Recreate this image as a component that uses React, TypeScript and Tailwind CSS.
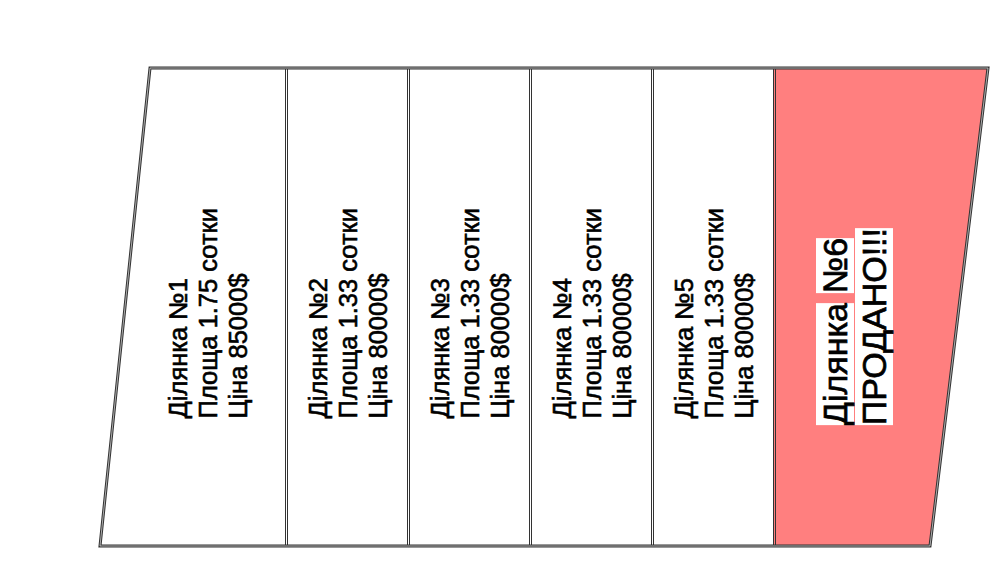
const PLOTS = [
  { n: 2, area: "1.33", price: "80000" },
  { n: 3, area: "1.33", price: "80000" },
  { n: 4, area: "1.33", price: "80000" },
  { n: 5, area: "1.33", price: "80000" },
];

function PlotText({ n, area, price }: { n: number; area: string; price: string }) {
  return (
    <div className="rotate-180 text-[25.5px] leading-[30px] text-black [-webkit-text-stroke:0.6px_black] [text-orientation:sideways] [writing-mode:vertical-rl]">
      <div>Ділянка №{n}</div>
      <div>Площа {area} сотки</div>
      <div>Ціна {price}$</div>
    </div>
  );
}

export default function App() {
  return (
    <div className="h-[571px] w-[1000px] bg-white font-['Liberation_Sans',Arial,sans-serif]">
      <div className="relative ml-[100px] pt-[67px]">
        <div className="relative flex h-[480px] w-[890px]">
          {/* plot 1 — slanted left edge comes from the outline svg */}
          <div className="flex w-[185px] items-center justify-center pl-[30px] pt-[12px]">
            <PlotText n={1} area="1.75" price="85000" />
          </div>

          {PLOTS.map((p) => (
            <div
              key={p.n}
              className="flex w-[122px] items-center justify-center border-l-[3px] border-double border-[#333] pt-[12px]"
            >
              <PlotText {...p} />
            </div>
          ))}

          {/* plot 6 — sold */}
          <div className="flex w-[217px] items-center justify-center border-l-[3px] border-double border-[#333] bg-[#ff7f7f] pr-[56px] pt-[40px] [clip-path:polygon(0_0,215px_0,157px_100%,0_100%)]">
            <div className="rotate-180 text-[34px] leading-[39px] text-black [-webkit-text-stroke:0.7px_black] [text-orientation:sideways] [writing-mode:vertical-rl]">
              <span className="bg-white">Ділянка</span> <span className="bg-white">№6</span>
              <br />
              <span className="bg-white">ПРОДАНО!!!</span>
            </div>
          </div>

          {/* outer boundary of the land */}
          <svg
            className="pointer-events-none absolute inset-0 overflow-visible"
            width="890"
            height="480"
            viewBox="0 0 890 480"
          >
            <polygon points="50,1 888,1 830,479 0,479" fill="none" stroke="#333" strokeWidth="3" />
            <polygon points="50,1 888,1 830,479 0,479" fill="none" stroke="#fff" strokeWidth="1" opacity="0.6" />
          </svg>
        </div>
      </div>
    </div>
  );
}
